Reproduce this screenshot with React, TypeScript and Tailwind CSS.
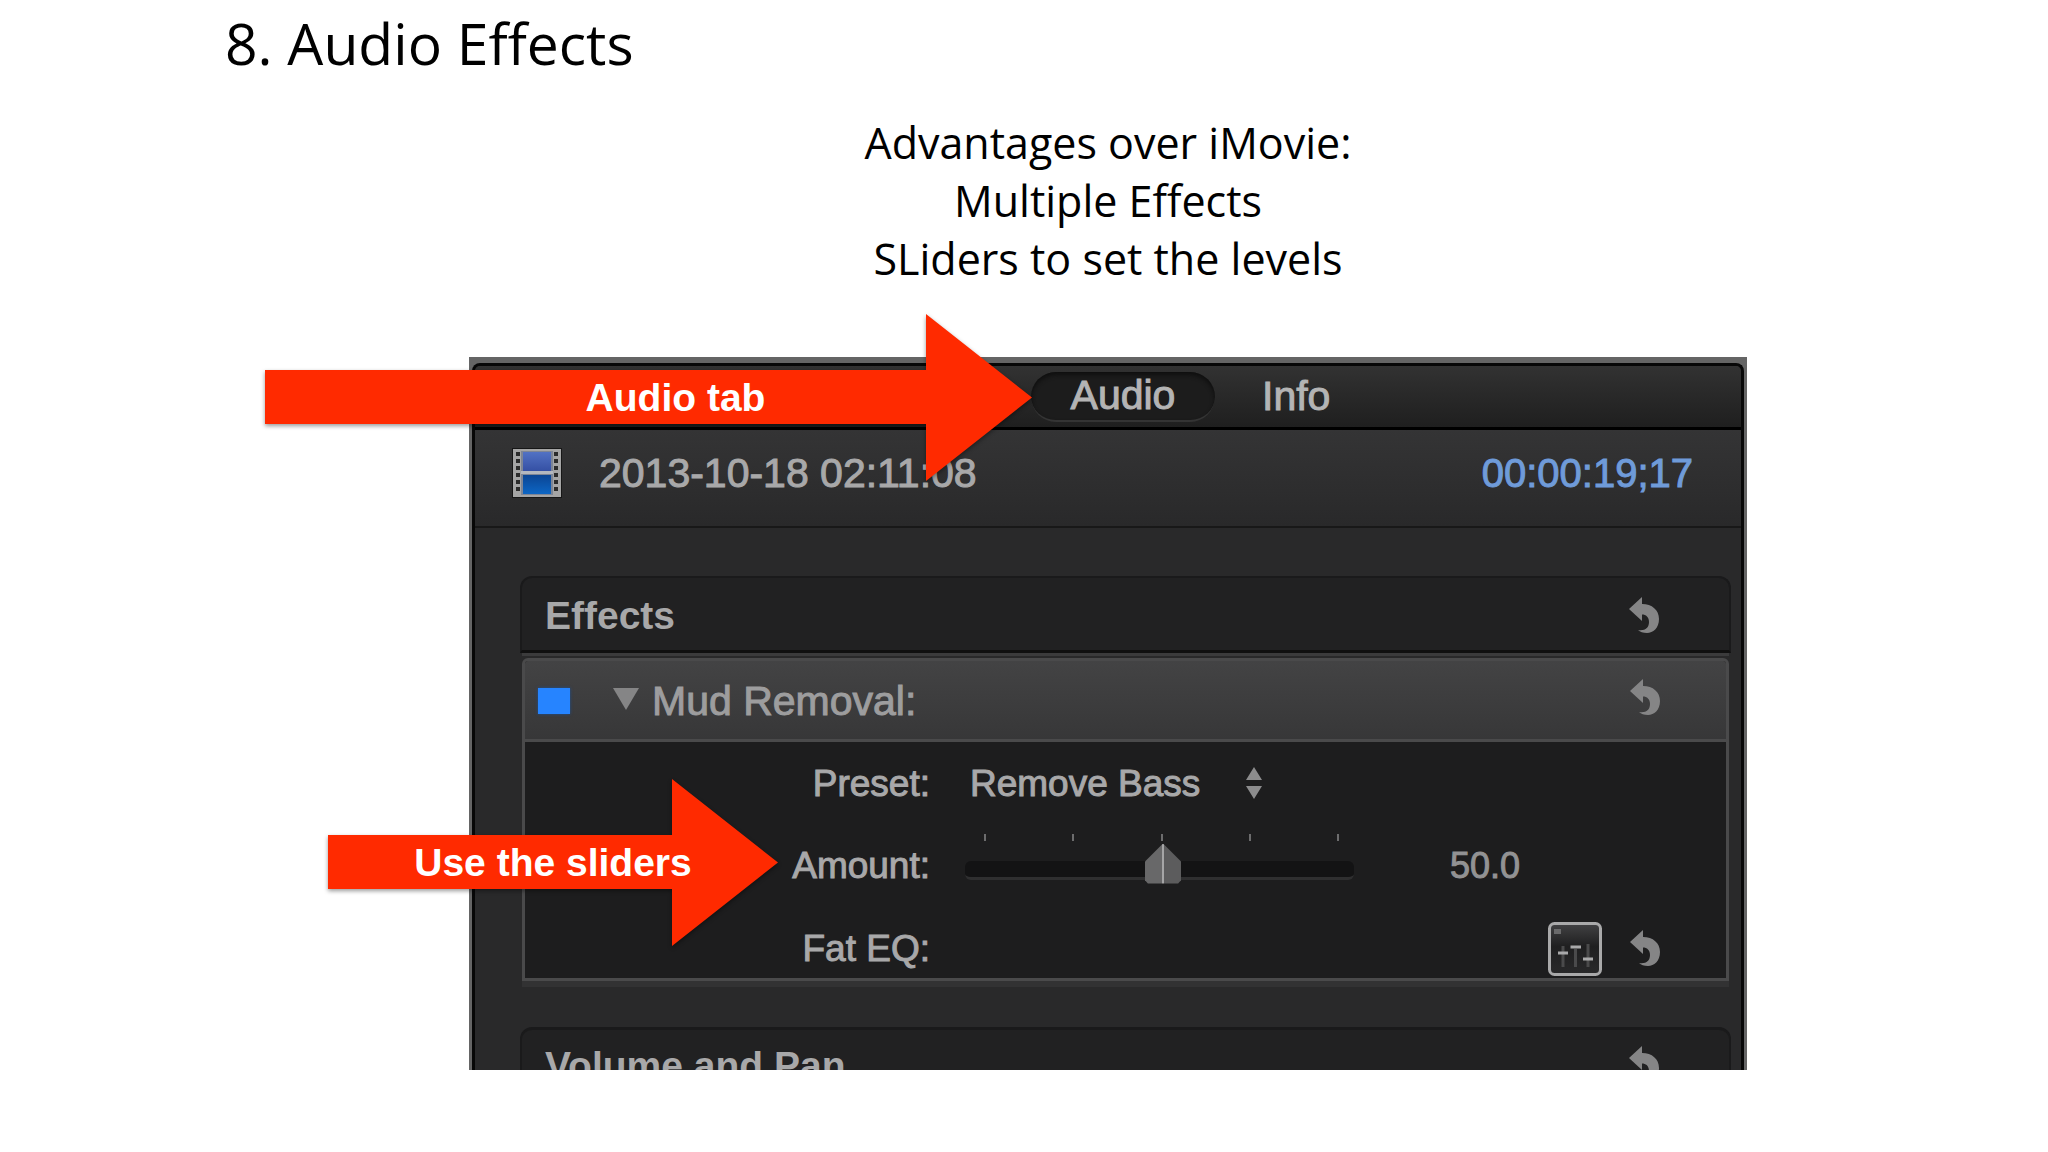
import { ReactNode } from 'react';

interface ArrowProps {
  className: string;
  textClassName: string;
  width: number;
  children: ReactNode;
}

// Block arrow: 54px shaft, 106px long head, 167px tall overall
function CalloutArrow({ className, textClassName, width, children }: ArrowProps) {
  const neck = width - 106;
  return (
    <div className={`absolute z-10 h-[167px] ${className}`}>
      <svg
        aria-hidden="true"
        width={width}
        height="167"
        viewBox={`0 0 ${width} 167`}
        className="absolute inset-0 overflow-visible drop-shadow-[0_2px_2px_rgba(0,0,0,0.4)]"
      >
        <path
          d={`M0 56H${neck}V0L${width} 83.5L${neck} 167V110H0Z`}
          fill="#ff2a00"
        />
      </svg>
      <p className={`relative flex h-full items-center justify-center text-[39px] leading-none font-bold text-white ${textClassName}`}>
        {children}
      </p>
    </div>
  );
}

function ResetButton({ label }: { label: string }) {
  return (
    <button type="button" aria-label={label} className="shrink-0">
      <svg width="30" height="37" viewBox="0 0 30 37" className="block">
        <path
          d="M0 12L13 0V7C23 7 30 13 30 22C30 31 24 36 18 36C14 36 11 35 9 33C16 34 20 31 20 25C20 20 17 17.500 13 17.500V24Z"
          fill="#858586"
        />
      </svg>
    </button>
  );
}

function FilmIcon() {
  const holes = [4, 11, 18, 25, 32, 39];
  return (
    <svg aria-hidden="true" width="50" height="50" viewBox="0 0 50 50" className="shrink-0">
      <defs>
        <linearGradient id="frameTop" x1="0" y1="0" x2="0" y2="1">
          <stop offset="0" stopColor="#5272c4" />
          <stop offset="1" stopColor="#3550a4" />
        </linearGradient>
        <linearGradient id="frameBottom" x1="0" y1="0" x2="0" y2="1">
          <stop offset="0" stopColor="#0b4594" />
          <stop offset="1" stopColor="#0d66c4" />
        </linearGradient>
      </defs>
      <rect width="50" height="50" fill="#171717" />
      <rect x="1" y="1" width="48" height="48" fill="#a5a5a5" />
      <rect x="9" y="3" width="32" height="44" fill="#7d8595" />
      <rect x="11" y="4" width="28" height="19" fill="url(#frameTop)" />
      <rect x="11" y="27" width="28" height="19" fill="url(#frameBottom)" />
      <rect x="9" y="23" width="32" height="3" fill="#b3b7bf" />
      {holes.map((y) => (
        <g key={y} fill="#2b2b2b">
          <rect x="4" y={y} width="4" height="4" />
          <rect x="42" y={y} width="4" height="4" />
        </g>
      ))}
    </svg>
  );
}

function EqualizerIcon() {
  return (
    <svg aria-hidden="true" width="54" height="54" viewBox="0 0 54 54" className="block">
      <defs>
        <linearGradient id="eqFill" x1="0" y1="0" x2="0" y2="1">
          <stop offset="0" stopColor="#424244" />
          <stop offset="0.45" stopColor="#1f1f20" />
          <stop offset="1" stopColor="#29292a" />
        </linearGradient>
      </defs>
      <rect x="1.500" y="1.500" width="51" height="51" rx="5" fill="url(#eqFill)" stroke="#a9a9aa" strokeWidth="3" />
      <rect x="6" y="7" width="7" height="5" fill="#6a6a6b" />
      <path d="M15 24V45M27.500 27V45M40 22V45" stroke="#4a4a4b" strokeWidth="3" />
      <path d="M10 31H20M22.500 25H33M35 37H45" stroke="#a9a9aa" strokeWidth="3" />
    </svg>
  );
}

const ticks = ['0', '25', '50', '75', '100'];

const labelClass = 'w-[405px] shrink-0 text-right';

export default function App() {
  return (
    <main className="min-h-screen bg-white pt-[11px] pb-20 font-['Liberation_Sans',Arial,sans-serif]">
      <h1 className="pl-[225px] font-['Open_Sans','Noto_Sans',sans-serif] text-[57px] leading-[64px] text-black">
        8. Audio Effects
      </h1>

      <section className="mr-[301px] ml-[469px] pt-[39px]">
        <p className="text-center font-['Open_Sans','Noto_Sans',sans-serif] text-[43px] leading-[58px] text-black">
          Advantages over iMovie:
          <br />
          Multiple Effects
          <br />
          SLiders to set the levels
        </p>

        <div className="relative mt-[69px]">
          <CalloutArrow className="-top-[43px] -left-[204px] w-[767px]" textClassName="pl-[54px]" width={767}>
            Audio tab
          </CalloutArrow>
          <CalloutArrow className="top-[422px] -left-[141px] w-[450px]" textClassName="" width={450}>
            Use the sliders
          </CalloutArrow>

          {/* Inspector window */}
          <div className="overflow-hidden border-x-3 border-t-6 border-[#656565] bg-[#656565]">
            <div className="overflow-hidden rounded-t-lg border-x-3 border-t-3 border-[#070707] bg-[#29292a] text-[#a8a8a9]">
              <nav className="flex h-[61px] items-center bg-linear-to-b from-[#323232] to-[#1f1f1f] pl-[556px] text-[41px] leading-none text-[#b4b4b4] [-webkit-text-stroke:1px]">
                <button
                  type="button"
                  className="h-[50px] w-[184px] rounded-full border-b-2 border-[#343434] bg-[#1c1c1c] shadow-[inset_0_3px_4px_#0f0f0f]"
                >
                  Audio
                </button>
                <button type="button" className="ml-[47px]">Info</button>
              </nav>

              <header className="flex h-[101px] items-center border-t-3 border-b-2 border-t-black border-b-[#181818] bg-linear-to-b from-[#343435] to-[#29292a] pr-[48px] pb-[10px] pl-[37px] leading-none">
                <FilmIcon />
                <span className="ml-[37px] text-[41px] [-webkit-text-stroke:1px]">2013-10-18 02:11:08</span>
                <span className="ml-auto text-[40px] text-[#6f9bd9] [-webkit-text-stroke:1px]">00:00:19;17</span>
              </header>

              <div className="pt-[48px] pr-[10px] pl-[45px]">
                <div className="flex h-[77px] items-center justify-between rounded-t-xl border-x-2 border-t-2 border-b-3 border-[#1a1a1b] border-b-[#101010] bg-[#212122] pt-[2px] pr-[70px] pl-[23px]">
                  <h2 className="text-[39px] leading-none font-bold">Effects</h2>
                  <ResetButton label="Reset effects" />
                </div>

                <div className="mr-[2px] ml-[2px] border-t-3 border-[#3b3b3c] pt-[2px]">
                  <div className="overflow-hidden rounded-t-md border-3 border-[#4a4a4b] bg-[#1d1d1e]">
                    <div className="flex h-[81px] items-center border-b-3 border-[#4a4a4b] bg-linear-to-b from-[#434344] to-[#373738] pt-[2px] pr-[66px] pl-[13px]">
                      <input
                        type="checkbox"
                        defaultChecked
                        aria-label="Enable Mud Removal"
                        className="h-[26px] w-8 appearance-none bg-[#2684ff] shadow-[0_0_3px_#1c4f94]"
                      />
                      <button type="button" aria-label="Collapse Mud Removal" className="ml-[43px] pb-1">
                        <svg width="26" height="22" viewBox="0 0 26 22" className="block">
                          <path d="M0 0H26L13 22Z" fill="#858586" />
                        </svg>
                      </button>
                      <h3 className="ml-[13px] text-[41px] leading-none text-[#9d9d9e] [-webkit-text-stroke:1px]">Mud Removal:</h3>
                      <div className="ml-auto">
                        <ResetButton label="Reset Mud Removal" />
                      </div>
                    </div>

                    <div className="text-[37px] leading-none">
                      <div className="flex h-[82px] items-center">
                        <label htmlFor="preset" className={`${labelClass} [-webkit-text-stroke:1px]`}>Preset:</label>
                        <select
                          id="preset"
                          className="ml-[40px] appearance-none bg-transparent leading-none [-webkit-text-stroke:1px]"
                        >
                          <option>Remove Bass</option>
                        </select>
                        <svg aria-hidden="true" width="16" height="32" viewBox="0 0 16 32" className="ml-[45px]">
                          <path d="M8 0L16 13H0ZM0 19H16L8 32Z" fill="#8c8c8d" />
                        </svg>
                      </div>

                      <div className="flex h-[83px] items-center">
                        <label htmlFor="amount" className={`${labelClass} [-webkit-text-stroke:1px]`}>Amount:</label>
                        <div className="ml-[35px] flex h-full w-[389px] flex-col pt-[10px]">
                          <div className="flex justify-between pr-[15px] pl-[19px]">
                            {ticks.map((tick) => (
                              <span key={tick} className="h-[7px] w-[2px] bg-[#6c6c6d]" />
                            ))}
                          </div>
                          <input
                            id="amount"
                            type="range"
                            min="0"
                            max="100"
                            defaultValue="51"
                            className="mt-[9px] h-10 w-full appearance-none bg-transparent [&::-webkit-slider-runnable-track]:h-[19px] [&::-webkit-slider-runnable-track]:rounded-md [&::-webkit-slider-runnable-track]:border-b-3 [&::-webkit-slider-runnable-track]:border-[#2f2f30] [&::-webkit-slider-runnable-track]:bg-[#131314] [&::-webkit-slider-thumb]:-mt-[17px] [&::-webkit-slider-thumb]:h-10 [&::-webkit-slider-thumb]:w-9 [&::-webkit-slider-thumb]:appearance-none [&::-webkit-slider-thumb]:bg-[linear-gradient(to_right,#686869_0,#686869_17px,#a5a5a6_17px,#a5a5a6_19px,#5c5c5d_19px)] [&::-webkit-slider-thumb]:[clip-path:polygon(50%_0,100%_45%,100%_92%,92%_100%,8%_100%,0_92%,0_45%)]"
                          />
                        </div>
                        <input
                          type="text"
                          aria-label="Amount value"
                          defaultValue="50.0"
                          className="mr-[206px] ml-auto w-[90px] bg-transparent text-right text-[36px] leading-none text-[#929293] [-webkit-text-stroke:1px]"
                        />
                      </div>

                      <div className="flex h-[71px] items-center pt-3 pr-[66px]">
                        <span className={`${labelClass} [-webkit-text-stroke:1px]`}>Fat EQ:</span>
                        <button type="button" aria-label="Open equalizer" className="mr-[28px] ml-auto">
                          <EqualizerIcon />
                        </button>
                        <ResetButton label="Reset Fat EQ" />
                      </div>
                    </div>
                  </div>
                  <div className="h-[6px] bg-[#323233]" />
                </div>

                {/* Next section is cut off by the window edge */}
                <div className="mt-[40px] h-[43px] overflow-hidden rounded-t-xl border-x-2 border-t-3 border-[#1a1a1b] bg-[#212122] pt-[16px] pr-[70px] pl-[23px]">
                  <div className="flex items-start justify-between">
                    <h2 className="text-[39px] leading-none font-bold">Volume and Pan</h2>
                    <ResetButton label="Reset volume and pan" />
                  </div>
                </div>
              </div>
            </div>
          </div>
        </div>
      </section>
    </main>
  );
}
